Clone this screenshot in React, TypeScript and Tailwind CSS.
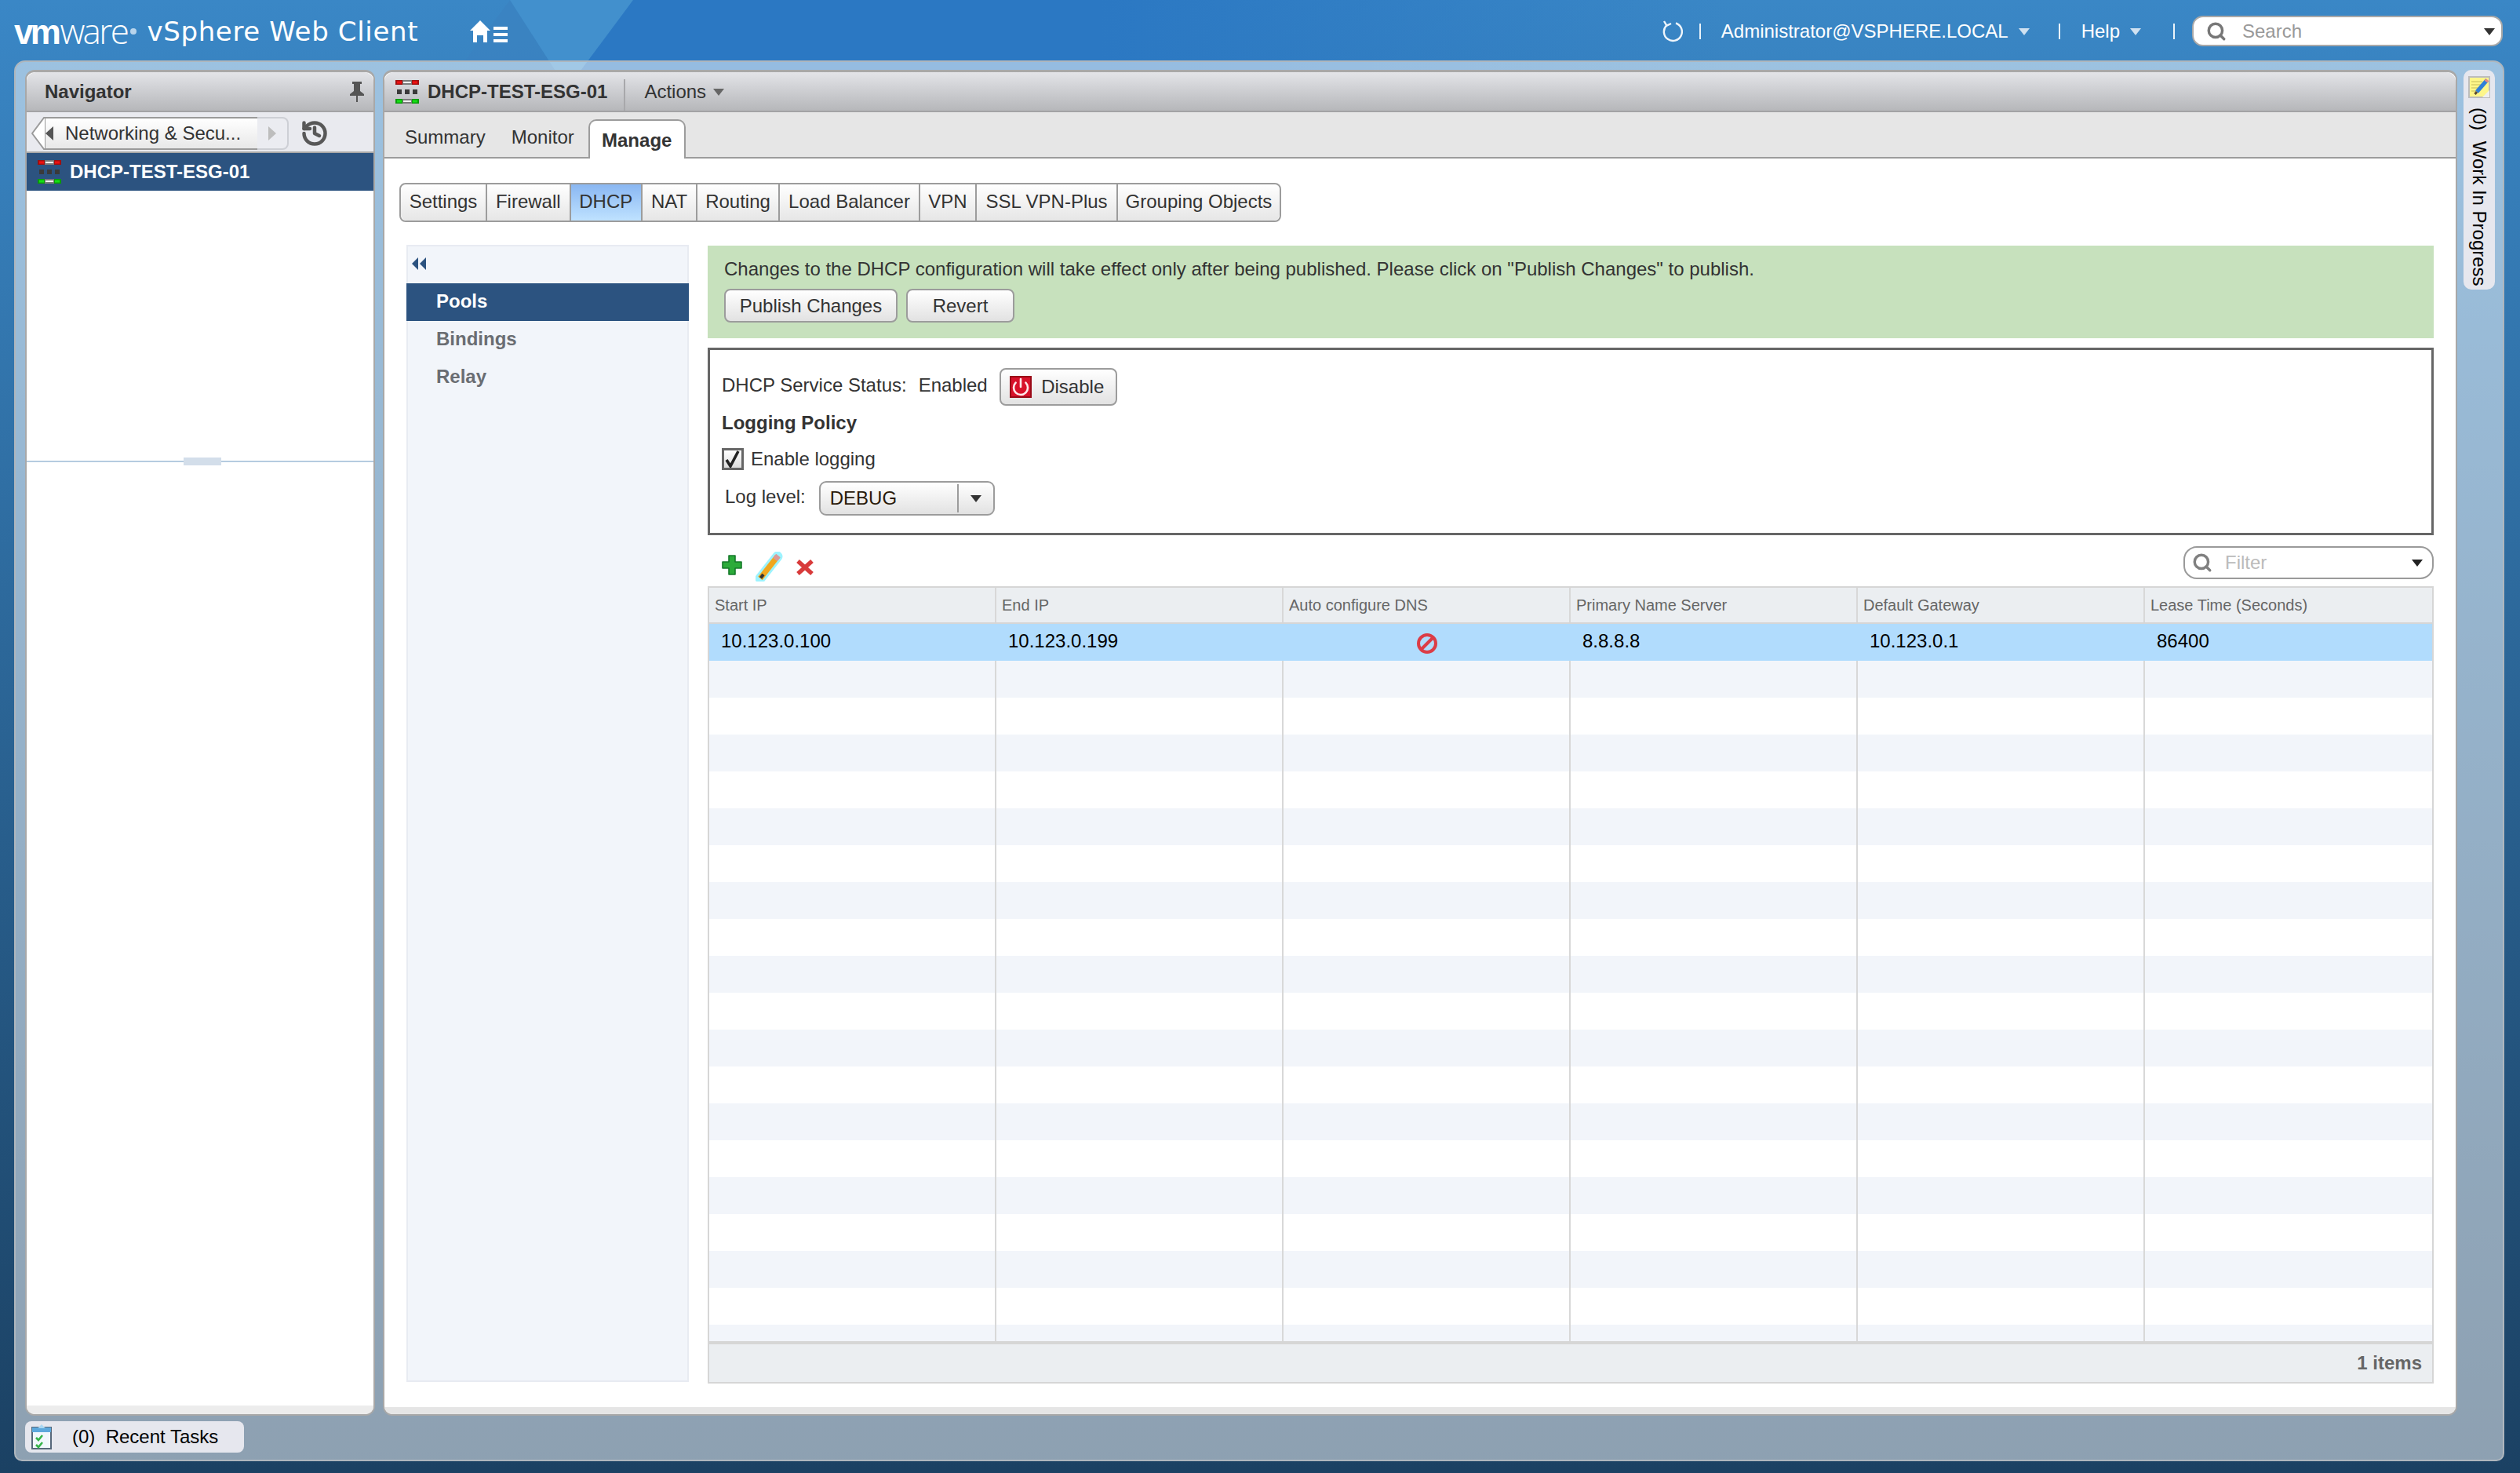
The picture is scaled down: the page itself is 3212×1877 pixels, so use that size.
import React from "react";
import { History, Power, Search } from "lucide-react";

const font = "font-['Liberation_Sans',Arial,sans-serif]";

function Caret({ className = "" }: { className?: string }) {
  return (
    <svg width="14" height="10" viewBox="0 0 14 10" className={className}>
      <path d="M0 1h14L7 10z" fill="currentColor" />
    </svg>
  );
}

function EsgIcon({ className = "" }: { className?: string }) {
  return (
    <svg width="30" height="30" viewBox="0 0 30 30" className={className}>
      <rect x="0" y="0" width="30" height="6" fill="#7a7a7a" />
      <rect x="0" y="0" width="9" height="6" fill="#a01010" />
      <rect x="21" y="0" width="9" height="6" fill="#a01010" />
      <rect x="2" y="1.5" width="6" height="3" fill="#f01010" />
      <rect x="22" y="1.5" width="6" height="3" fill="#f01010" />
      <rect x="10" y="2" width="10" height="2" fill="#f0f0f0" />
      <rect x="2" y="12" width="6" height="6" fill="#3a3a3a" />
      <rect x="12" y="12" width="6" height="6" fill="#3a3a3a" />
      <rect x="22" y="12" width="6" height="6" fill="#3a3a3a" />
      <rect x="0" y="24" width="30" height="6" fill="#7a7a7a" />
      <rect x="0" y="24" width="9" height="6" fill="#0a9a0a" />
      <rect x="21" y="24" width="9" height="6" fill="#0a9a0a" />
      <rect x="2" y="25.5" width="6" height="3" fill="#14e014" />
      <rect x="22" y="25.5" width="6" height="3" fill="#14e014" />
      <rect x="10" y="26" width="10" height="2" fill="#f0f0f0" />
    </svg>
  );
}

function TopBar() {
  return (
    <header className="flex h-[77px] shrink-0 items-center pl-[18px] pr-[22px] pt-[2px] text-white">
      <div className="flex items-baseline leading-none">
        <span className="text-[44px] font-bold tracking-[-3.6px]">vm</span>
        <span className="ml-[2px] font-['Open_Sans',sans-serif] text-[44px] font-light tracking-[-2.6px]">ware</span>
        <span className="ml-[4px] h-[8px] w-[8px] self-center rounded-full bg-[#b8d4ec]" />
      </div>
      <span className="ml-[13px] font-['DejaVu_Sans',sans-serif] text-[34px] leading-none tracking-[0.65px]">vSphere Web Client</span>
      <svg width="48" height="28" viewBox="0 0 48 28" className="ml-[66px]">
        <path d="M13 0L26 13h-4v15h-5v-9h-8v9H4V13H0z" fill="#fff" />
        <rect x="30" y="8" width="18" height="4" fill="#fff" />
        <rect x="30" y="16" width="18" height="4" fill="#fff" />
        <rect x="30" y="24" width="18" height="4" fill="#fff" />
      </svg>
      <div className="flex-1" />
      <svg width="28" height="28" viewBox="0 0 28 28" fill="none" stroke="#eef5fb" strokeWidth="2.4">
        <path d="M7 6.5A11.5 11.5 0 1 0 19 3.5" />
        <path d="M4 1l3.4 5.6L13 4" />
      </svg>
      <div className="ml-[21px] h-[20px] w-[2px] bg-white/90" />
      <span className="ml-[26px] text-[24px]">Administrator@VSPHERE.LOCAL</span>
      <Caret className="ml-[13px] text-[#cfe1f1]" />
      <div className="ml-[37px] h-[20px] w-[2px] bg-white/90" />
      <span className="ml-[27px] text-[24px]">Help</span>
      <Caret className="ml-[13px] text-[#cfe1f1]" />
      <div className="ml-[41px] h-[20px] w-[2px] bg-white/90" />
      <div className="ml-[22px] flex h-[39px] w-[396px] items-center rounded-[14px] border-2 border-[#a8a8a8] bg-white pl-[16px] pr-[8px]">
        <Search size={26} strokeWidth={3.2} className="text-[#777]" />
        <span className="ml-[20px] text-[24px] text-[#999]">Search</span>
        <div className="flex-1" />
        <Caret className="text-[#333]" />
      </div>
    </header>
  );
}

function PanelHead({ children }: { children: React.ReactNode }) {
  return (
    <div className="flex h-[51px] shrink-0 items-center rounded-t-[12px] border-b-2 border-[#a3a3a5] bg-gradient-to-b from-[#e3e4e8] to-[#b6b7ba]">
      {children}
    </div>
  );
}

function Navigator() {
  return (
    <section className="flex w-[446px] shrink-0 flex-col overflow-hidden rounded-[12px] border-x-2 border-b-2 border-t-[3px] border-[#a8a8a8] bg-white">
      <PanelHead>
        <span className="ml-[23px] text-[24px] font-bold text-[#333]">Navigator</span>
        <div className="flex-1" />
        <svg width="18" height="26" viewBox="0 0 18 26" className="mr-[12px]">
          <path d="M3 0h12v3h-2v9l5 4v2H10v8H8v-8H0v-2l5-4V3H3z" fill="#555" />
        </svg>
      </PanelHead>
      <div className="flex h-[52px] shrink-0 items-center border-b-2 border-[#a8a8a8] bg-[#e9eaef] pl-[6px] pt-[3px]">
        <div className="relative flex h-[42px] w-[328px] items-center">
          <svg width="18" height="42" viewBox="0 0 18 42" className="shrink-0">
            <path d="M18 1H16L1 21l15 20h2z" fill="#fff" stroke="#9a9a9a" strokeWidth="2" />
          </svg>
          <div className="flex h-full w-[270px] items-center border-y-2 border-[#9a9a9a] bg-gradient-to-b from-white to-[#e8e8e8] text-[24px] text-[#333]">
            <svg width="10" height="18" viewBox="0 0 10 18" className="ml-0">
              <path d="M10 0v18L0 9z" fill="#555" />
            </svg>
            <span className="ml-[15px]">Networking &amp; Secu...</span>
          </div>
          <div className="flex h-full w-[40px] items-center justify-center rounded-r-[8px] border-2 border-l-0 border-[#cdcfd5] bg-[#ebecf1]">
            <svg width="10" height="18" viewBox="0 0 10 18">
              <path d="M0 0v18l10-9z" fill="#bdbdbd" />
            </svg>
          </div>
        </div>
        <History size={36} strokeWidth={3} className="ml-[15px] text-[#585858]" />
      </div>
      <div className="flex h-[48px] shrink-0 items-center bg-[#2c5380] text-[24px] font-bold text-white">
        <EsgIcon className="ml-[14px]" />
        <span className="ml-[11px]">DHCP-TEST-ESG-01</span>
      </div>
      <div className="h-[344px] shrink-0" />
      <div className="relative h-[2px] shrink-0 bg-[#b5cbe0]">
        <div className="absolute left-[200px] top-[-4px] h-[10px] w-[48px] bg-[#d3deea]" />
      </div>
      <div className="flex-1" />
      <div className="h-[11px] shrink-0 bg-[#ececec]" />
    </section>
  );
}

const subTabs = [
  { label: "Settings", cls: "w-[108px] rounded-l-[8px]" },
  { label: "Firewall", cls: "w-[106.5px] border-l-2" },
  { label: "DHCP", cls: "w-[91.5px] border-l-2 bg-gradient-to-b from-[#8ab7f2] to-[#bfe2ff]" },
  { label: "NAT", cls: "w-[70px] border-l-2" },
  { label: "Routing", cls: "w-[105px] border-l-2" },
  { label: "Load Balancer", cls: "w-[179px] border-l-2" },
  { label: "VPN", cls: "w-[72px] border-l-2" },
  { label: "SSL VPN-Plus", cls: "w-[180px] border-l-2" },
  { label: "Grouping Objects", cls: "w-[208px] border-l-2 rounded-r-[8px]" },
];

const btn = "flex items-center justify-center rounded-[8px] border-2 border-[#9c9c9c] bg-gradient-to-b from-white to-[#e2e2e2] text-[24px] text-[#333]";

function Toolbar() {
  return (
    <div className="flex h-[65px] shrink-0 items-start pl-[18px]">
      <svg width="26" height="26" viewBox="0 0 26 26" className="mt-[25px]">
        <path d="M9 1h8v8h8v8h-8v8H9v-8H1V9h8z" fill="#2cab3a" stroke="#14792a" strokeWidth="1.6" strokeLinejoin="round" />
      </svg>
      <svg width="36" height="38" viewBox="0 0 36 38" className="ml-[17px] mt-[21px]">
        <path d="M6 34L28 6" stroke="#7df0ff" strokeWidth="13" strokeLinecap="round" opacity="0.75" />
        <path d="M6 34L28 6" stroke="#f0a71f" strokeWidth="7" />
        <path d="M25 10l4-5" stroke="#d99a9a" strokeWidth="7" />
        <path d="M6.5 33.5L10 29" stroke="#333" strokeWidth="4" />
      </svg>
      <svg width="22" height="20" viewBox="0 0 22 20" className="ml-[16px] mt-[31px]">
        <path d="M2 2l18 16M20 2L2 18" stroke="#d83a3a" strokeWidth="5.4" />
      </svg>
      <div className="flex-1" />
      <div className="mt-[14px] flex h-[42px] w-[319px] items-center rounded-[17px] border-2 border-[#9a9a9a] bg-white pl-[9px] pr-[12px]">
        <Search size={26} strokeWidth={3.2} className="text-[#808080]" />
        <span className="ml-[16px] text-[24px] text-[#bbb]">Filter</span>
        <div className="flex-1" />
        <Caret className="text-[#222]" />
      </div>
    </div>
  );
}

const headers = ["Start IP", "End IP", "Auto configure DNS", "Primary Name Server", "Default Gateway", "Lease Time (Seconds)"];
const cellLine = "border-r-2 border-[#d8d8d8] last:border-r-0";
const cellText = "flex items-center pb-[4px] pl-[15px]";

function DataTable() {
  const blanks = Array.from({ length: 19 }, (_, i) => i);
  return (
    <div className="flex min-h-0 flex-1 flex-col border-x-2 border-t-2 border-[#d6d6d6]">
      <div className="grid h-[46px] shrink-0 grid-cols-6 border-b-2 border-[#d6d6d6] bg-[#ebeef1] text-[20px] text-[#666]">
        {headers.map((h) => (
          <div key={h} className={`flex items-center pl-[7px] ${cellLine}`}>{h}</div>
        ))}
      </div>
      <div className="flex min-h-0 flex-1 flex-col overflow-hidden">
        <div className="grid h-[47px] shrink-0 grid-cols-6 bg-[#b1dcfd] text-[24px] text-black">
          <div className={cellText}>10.123.0.100</div>
          <div className={cellText}>10.123.0.199</div>
          <div className="flex items-center justify-center pt-[2px]">
            <svg width="28" height="28" viewBox="0 0 28 28" fill="none" stroke="#dc3c46" strokeWidth="4">
              <circle cx="14" cy="14" r="11" />
              <path d="M6.5 21.5L21.5 6.5" />
            </svg>
          </div>
          <div className={cellText}>8.8.8.8</div>
          <div className={cellText}>10.123.0.1</div>
          <div className={cellText}>86400</div>
        </div>
        {blanks.map((i) => (
          <div key={i} className={`grid h-[47px] shrink-0 grid-cols-6 ${i % 2 === 0 ? "bg-[#f2f5fa]" : "bg-white"}`}>
            {headers.map((h) => (
              <div key={h} className={cellLine} />
            ))}
          </div>
        ))}
      </div>
      <div className="flex h-[54px] shrink-0 items-center justify-end border-b-2 border-t-4 border-[#d6d6d6] bg-[#ebeef1] pr-[13px] text-[24px] font-bold text-[#666]">
        1 items
      </div>
    </div>
  );
}

function MainPanel() {
  return (
    <section className="flex w-[2644px] shrink-0 flex-col overflow-hidden rounded-[12px] border-x-2 border-b-2 border-t-[3px] border-[#a8a8a8] bg-white text-[#333]">
      <PanelHead>
        <EsgIcon className="ml-[14px]" />
        <span className="ml-[11px] text-[24px] font-bold">DHCP-TEST-ESG-01</span>
        <div className="ml-[21px] h-[40px] w-[2px] self-end bg-[#a8a8ab]" />
        <span className="ml-[24px] text-[24px]">Actions</span>
        <Caret className="ml-[9px] text-[#666]" />
      </PanelHead>
      <div className="flex h-[59px] shrink-0 items-end border-b-2 border-[#9c9c9c] bg-[#e6e6e6] pl-[26px] text-[24px]">
        <span className="mb-[7px]">Summary</span>
        <span className="mb-[7px] ml-[33px]">Monitor</span>
        <div className="relative -mb-[2px] ml-[18px] flex h-[50px] w-[124px] items-center justify-center rounded-t-[10px] border-2 border-b-0 border-[#9c9c9c] bg-white pt-[1px] font-bold">
          Manage
        </div>
      </div>
      <div className="flex min-h-0 flex-1 flex-col">
        <nav className="ml-[19px] mt-[31px] flex h-[50px] w-max shrink-0 rounded-[8px] border-2 border-[#9c9c9c] text-[24px]">
          {subTabs.map((t) => (
            <div
              key={t.label}
              className={`flex items-center justify-center border-[#9c9c9c] pb-[3px] ${t.cls} ${t.label === "DHCP" ? "" : "bg-gradient-to-b from-white to-[#e6e6e6]"}`}
            >
              {t.label}
            </div>
          ))}
        </nav>
        <div className="ml-[28px] mr-[28px] mt-[29px] flex min-h-0 flex-1 gap-[24px]">
          <aside className="flex h-[1449px] w-[360px] shrink-0 flex-col self-start border-2 border-[#e8ebf2] bg-[#f2f5fa] text-[24px] font-bold text-[#6a6d72]">
            <div className="flex h-[47px] shrink-0 items-center pb-[3px] pl-[4px]">
              <svg width="20" height="16" viewBox="0 0 20 16">
                <path d="M9 0v16L1 8zM19 0v16l-8-8z" fill="#2c5380" />
              </svg>
            </div>
            <div className="-mx-[2px] flex h-[48px] shrink-0 items-center bg-[#2c5380] pb-[3px] pl-[38px] text-white">Pools</div>
            <div className="flex h-[48px] shrink-0 items-center pb-[3px] pl-[36px]">Bindings</div>
            <div className="flex h-[48px] shrink-0 items-center pb-[3px] pl-[36px]">Relay</div>
          </aside>
          <div className="flex min-w-0 flex-1 flex-col pt-[1px]">
            <div className="h-[118px] shrink-0 bg-[#c7e1bd] pl-[21px] pt-[16px] text-[24px]">
              <p className="leading-[28px]">Changes to the DHCP configuration will take effect only after being published. Please click on "Publish Changes" to publish.</p>
              <div className="mt-[11px] flex gap-[11px]">
                <div className={`${btn} h-[43px] w-[221px]`}>Publish Changes</div>
                <div className={`${btn} h-[43px] w-[138px]`}>Revert</div>
              </div>
            </div>
            <div className="mt-[12px] h-[239px] shrink-0 border-[3px] border-[#666] pl-[15px] pt-[23px] text-[24px]">
              <div className="flex h-[48px] items-center">
                <span className="pb-[4px]">DHCP Service Status:</span>
                <span className="ml-[15px] pb-[4px]">Enabled</span>
                <div className={`${btn} ml-[15px] h-[48px] w-[150px] pr-[3px]`}>
                  <span className="flex h-[28px] w-[28px] items-center justify-center border-2 border-[#9a0a18] bg-[#d8112a]">
                    <Power size={24} strokeWidth={2.6} className="text-[#ffe8ea]" />
                  </span>
                  <span className="ml-[12px]">Disable</span>
                </div>
              </div>
              <div className="flex h-[44px] items-center font-bold">Logging Policy</div>
              <div className="flex h-[48px] items-center">
                <span className="flex h-[28px] w-[28px] items-center justify-center border-[3px] border-[#666] bg-gradient-to-b from-white to-[#dcdcdc]">
                  <svg width="20" height="22" viewBox="0 0 20 22" fill="none" stroke="#222" strokeWidth="3.6">
                    <path d="M2 12l5 8L17 1" />
                  </svg>
                </span>
                <span className="ml-[9px]">Enable logging</span>
              </div>
              <div className="mt-[4px] flex h-[44px] items-center">
                <span className="ml-[4px] pb-[4px]">Log level:</span>
                <div className="ml-[17px] flex h-[44px] w-[224px] items-center rounded-[9px] border-2 border-[#9c9c9c] bg-gradient-to-b from-white to-[#e2e2e2] text-[#2a1a0a]">
                  <span className="ml-[12px] w-[162px]">DEBUG</span>
                  <div className="h-[36px] w-[2px] bg-[#9c9c9c]" />
                  <Caret className="ml-[15px] text-[#333]" />
                </div>
              </div>
            </div>
            <Toolbar />
            <DataTable />
            <div className="h-[30px] shrink-0" />
          </div>
        </div>
        <div className="h-[9px] shrink-0 bg-[#e5e5e5]" />
      </div>
    </section>
  );
}

function WorkInProgress() {
  return (
    <aside className="flex h-[280px] w-[40px] shrink-0 flex-col items-center rounded-[10px] bg-[#e6e7ee] pt-[8px]">
      <svg width="28" height="28" viewBox="0 0 28 28">
        <rect x="1" y="1" width="26" height="26" fill="#fdf68a" stroke="#bdbdbd" strokeWidth="2" />
        <path d="M4 7h14M4 11h12M4 15h9M4 19h6" stroke="#d8cf6a" strokeWidth="1.5" />
        <path d="M11 20L24 5" stroke="#2f7fd8" strokeWidth="5" />
        <path d="M22.5 7l2-2.4" stroke="#e08a8a" strokeWidth="5" />
        <path d="M11 20l-2.5 3" stroke="#5a4a30" strokeWidth="3" />
        <path d="M18 27l9-9v9z" fill="#eee" />
      </svg>
      <span className="mt-[12px] whitespace-pre text-[24px] leading-none text-black [writing-mode:vertical-rl]">(0)  Work In Progress</span>
    </aside>
  );
}

function RecentTasks() {
  return (
    <div className="flex h-[40px] w-[279px] items-center rounded-[8px] bg-[#e6e7ee] pl-[8px] text-[24px] text-black">
      <svg width="26" height="32" viewBox="0 0 26 32">
        <rect x="1" y="4" width="24" height="27" fill="#f1f7fc" stroke="#56677a" strokeWidth="2" />
        <rect x="1" y="4" width="24" height="6" fill="#5ca8dc" />
        <path d="M8 5l5-5 5 5z" fill="#a9d7f2" />
        <path d="M6 17l3 3 5-6M6 26l3 3 5-6" fill="none" stroke="#36b44a" strokeWidth="2.6" />
      </svg>
      <span className="ml-[26px] whitespace-pre">(0)  Recent Tasks</span>
    </div>
  );
}

export default function App() {
  return (
    <div className={`relative flex h-[1877px] w-[3212px] flex-col overflow-hidden bg-gradient-to-b from-[#3a87c6] to-[#1b4163] ${font}`}>
      <svg width="3212" height="130" viewBox="0 0 3212 130" className="absolute left-0 top-0">
        <defs>
          <linearGradient id="facet" x1="746" y1="0" x2="2200" y2="0" gradientUnits="userSpaceOnUse">
            <stop offset="0" stopColor="#2b78c3" />
            <stop offset="0.45" stopColor="#2b78c3" />
            <stop offset="1" stopColor="#2b78c3" stopOpacity="0" />
          </linearGradient>
        </defs>
        <path d="M650 0L593 77L727 120z" fill="#3a82c1" opacity="0.7" />
        <path d="M650 0H807L727 120z" fill="#4290cd" />
        <path d="M807 0H3212V90H740z" fill="url(#facet)" />
      </svg>
      <div className="relative flex min-h-0 flex-col">
        <TopBar />
        <main className="ml-[18px] flex h-[1785px] w-[3174px] flex-col rounded-b-[10px] rounded-t-[14px] border-2 border-[#aeb6bd] bg-white/50 pl-[12px] pr-[10px] pt-[10px]">
          <div className="flex h-[1715px] shrink-0">
            <Navigator />
            <div className="w-[10px] shrink-0" />
            <MainPanel />
            <div className="w-[8px] shrink-0" />
            <WorkInProgress />
          </div>
          <div className="mt-[7px]">
            <RecentTasks />
          </div>
        </main>
      </div>
    </div>
  );
}
